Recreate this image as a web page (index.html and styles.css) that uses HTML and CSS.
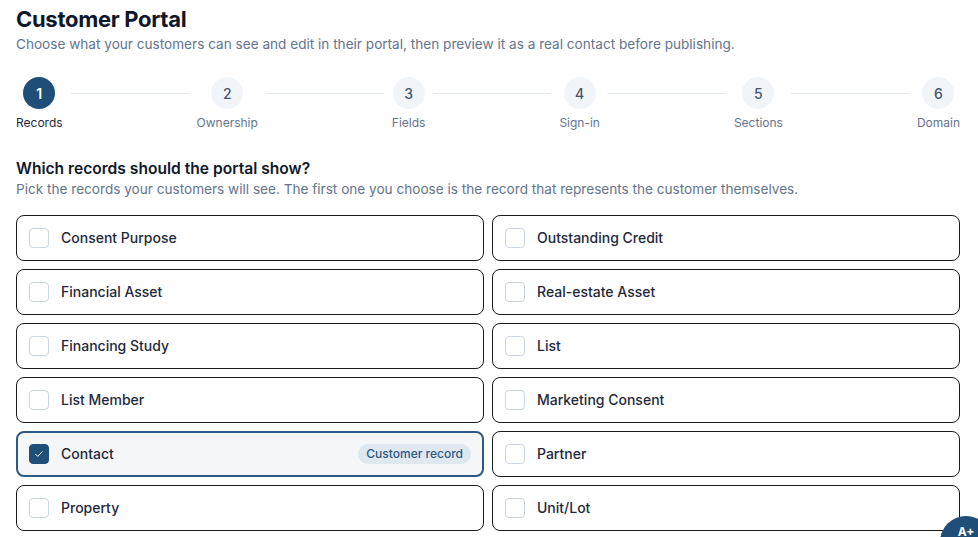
FILE: index.html
```html
<!DOCTYPE html>
<html lang="en">
<head>
  <meta charset="UTF-8" />
  <meta name="viewport" content="width=device-width, initial-scale=1.0" />
  <title>Customer Portal</title>
  <link rel="stylesheet" href="styles.css">
</head>
<body>
  <div class="page">
    <header class="page-head">
      <h1>Customer Portal</h1>
      <p>Choose what your customers can see and edit in their portal, then preview it as a real contact before publishing.</p>
    </header>

    <ol class="stepper">
      <li class="step active"><span class="step-num">1</span><span class="step-label">Records</span></li>
      <li class="step-line"></li>
      <li class="step"><span class="step-num">2</span><span class="step-label">Ownership</span></li>
      <li class="step-line"></li>
      <li class="step"><span class="step-num">3</span><span class="step-label">Fields</span></li>
      <li class="step-line"></li>
      <li class="step"><span class="step-num">4</span><span class="step-label">Sign-in</span></li>
      <li class="step-line"></li>
      <li class="step"><span class="step-num">5</span><span class="step-label">Sections</span></li>
      <li class="step-line"></li>
      <li class="step"><span class="step-num">6</span><span class="step-label">Domain</span></li>
    </ol>

    <section class="records">
      <h2>Which records should the portal show?</h2>
      <p class="hint">Pick the records your customers will see. The first one you choose is the record that represents the customer themselves.</p>

      <div class="record-grid" id="recordGrid"></div>
    </section>

    <button class="fab" type="button">A+</button>
  </div>

  <script>
    const records = [
      "Consent Purpose", "Outstanding Credit",
      "Financial Asset", "Real-estate Asset",
      "Financing Study", "List",
      "List Member", "Marketing Consent",
      "Contact", "Partner",
      "Property", "Unit/Lot"
    ];
    const selected = ["Contact"];

    const check = '<svg viewBox="0 0 20 20" width="12" height="12"><path d="M4.5 10.5l3.5 3.5 7.5-8" fill="none" stroke="#fff" stroke-width="1.6" stroke-linecap="round" stroke-linejoin="round"/></svg>';

    const grid = document.getElementById("recordGrid");
    records.forEach(name => {
      const on = selected.includes(name);
      const card = document.createElement("label");
      card.className = "record-card" + (on ? " selected" : "");
      card.innerHTML = `
        <span class="box">${on ? check : ""}</span>
        <span class="record-name">${name}</span>
        ${on && selected[0] === name ? '<span class="badge">Customer record</span>' : ""}
      `;
      grid.appendChild(card);
    });
  </script>
</body>
</html>
```

FILE: styles.css
```css
html, body {
  margin: 0;
  background: #ffffff;
}
body {
  font-family: Inter, "Noto Sans", sans-serif;
  color: #0f172a;
}
.page {
  position: relative;
  height: 537px;
  overflow: hidden;
  padding: 4px 18px 0 16px;
  box-sizing: border-box;
}
.page-head h1 {
  margin: 0;
  font-size: 22px;
  line-height: 30px;
  font-weight: 700;
  letter-spacing: -0.3px;
}
.page-head p {
  margin: 0;
  font-size: 13.6px;
  line-height: 20px;
  color: #64748b;
}

/* wizard steps */
.stepper {
  display: flex;
  align-items: flex-start;
  list-style: none;
  margin: 23px 0 0;
  padding: 0;
}
.step {
  display: flex;
  flex-direction: column;
  align-items: center;
  gap: 6px;
}
.step-num {
  width: 32px;
  height: 32px;
  border-radius: 50%;
  background: #f1f5f9;
  color: #475569;
  font-size: 14px;
  font-weight: 500;
  display: flex;
  align-items: center;
  justify-content: center;
}
.step-label {
  font-size: 12px;
  line-height: 16px;
  color: #64748b;
}
.step.active .step-num {
  background: #1f4e79;
  color: #ffffff;
  font-weight: 600;
}
.step.active .step-label {
  color: #1e293b;
}
.step-line {
  flex: 1;
  height: 1px;
  margin: 16px 8px 0;
  background: #e2e8f0;
}

/* record picker */
.records {
  margin-top: 27px;
}
.records h2 {
  margin: 0;
  font-size: 15.6px;
  line-height: 22px;
  font-weight: 600;
  color: #0f172a;
}
.records .hint {
  margin: 0;
  font-size: 13.6px;
  line-height: 19px;
  color: #64748b;
}
.record-grid {
  display: grid;
  grid-template-columns: 1fr 1fr;
  gap: 8px;
  margin-top: 16px;
}
.record-card {
  display: flex;
  align-items: center;
  gap: 12px;
  padding: 12px;
  border: 1px solid #1a1a1a;
  border-radius: 8px;
  background: #ffffff;
  cursor: pointer;
}
.record-card .box {
  width: 18px;
  height: 18px;
  flex: none;
  border: 1px solid #cbd5e1;
  border-radius: 4px;
  background: #ffffff;
  display: flex;
  align-items: center;
  justify-content: center;
}
.record-name {
  font-size: 14px;
  line-height: 20px;
  font-weight: 500;
  color: #1e293b;
}
.record-card.selected {
  border: 2px solid #2c5a86;
  padding: 11px;
  background: #f4f6f8;
}
.record-card.selected .box {
  background: #1f4e79;
  border-color: #1f4e79;
}
.badge {
  margin-left: auto;
  padding: 2px 8px;
  border-radius: 999px;
  background: #dfe7ef;
  color: #2c5a86;
  font-size: 12px;
  line-height: 16px;
  font-weight: 500;
}

.fab {
  position: absolute;
  right: -14px;
  bottom: -31px;
  width: 52px;
  height: 52px;
  border: none;
  border-radius: 50%;
  background: #1f4e79;
  color: #ffffff;
  font-family: inherit;
  font-size: 12px;
  font-weight: 700;
  padding: 0 0 22px;
}
```
